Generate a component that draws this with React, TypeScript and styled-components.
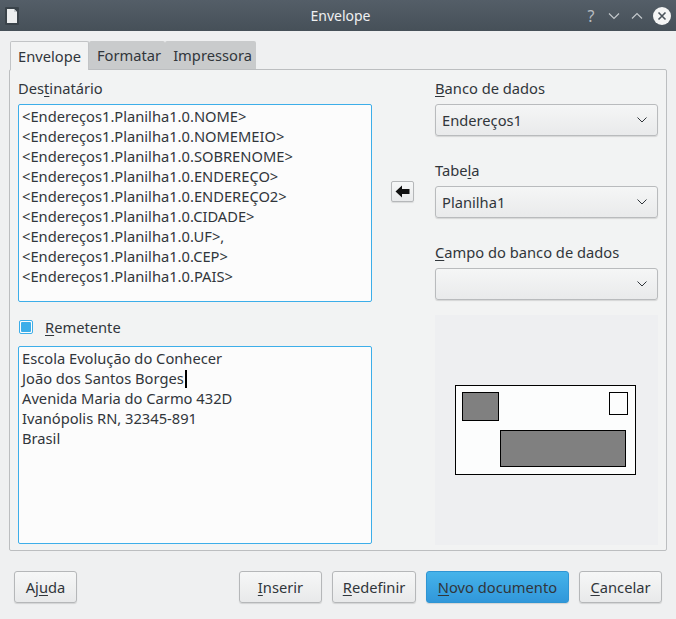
import React from "react";
import styled, { createGlobalStyle } from "styled-components";

const FS = "14.7px";

const Global = createGlobalStyle`
  html, body { margin: 0; padding: 0; background: #eff0f1; }
  body { font-family: "Noto Sans", "Open Sans", sans-serif; font-size: ${FS}; color: #31363b; }
  #root { width: 676px; height: 619px; overflow: hidden; }
`;

const Window = styled.div`
  width: 676px;
  height: 619px;
  display: flex;
  flex-direction: column;
  background: #eff0f1;
`;

const TitleBar = styled.div`
  height: 31px;
  flex: none;
  display: grid;
  grid-template-columns: 1fr auto 1fr;
  align-items: center;
  padding: 0 4px 0 5px;
  background: linear-gradient(#545e68, #465058);
  color: #eff0f1;
`;

const Title = styled.div`
  text-align: center;
  font-size: 14px;
  padding-left: 4px;
`;

const TitleButtons = styled.div`
  display: flex;
  justify-content: flex-end;
  align-items: center;
  gap: 7px;
`;

const TitleBtn = styled.div<{ $w?: number }>`
  width: ${(p) => p.$w ?? 16}px;
  height: 20px;
  display: flex;
  align-items: center;
  justify-content: center;
  color: #b8bdc2;
  font-size: 16px;
`;

const Body = styled.div`
  flex: 1;
  display: flex;
  flex-direction: column;
  padding: 10px 9px 0 9px;
`;

const TabBar = styled.div`
  display: flex;
  padding-left: 1px;
  height: 28px;
  position: relative;
  z-index: 1;
`;

const Tab = styled.div<{ $active?: boolean }>`
  height: ${(p) => (p.$active ? "29px" : "28px")};
  box-sizing: border-box;
  padding: 0 ${(p) => (p.$active ? "7px" : "4px")} 0 ${(p) => (p.$active ? "7px" : "8px")};
  display: flex;
  align-items: center;
  font-size: ${FS};
  background: ${(p) => (p.$active ? "#f2f3f3" : "#c9cbcc")};
  border: ${(p) => (p.$active ? "1px solid #c2c4c6" : "none")};
  border-bottom: none;
  border-radius: 2px 2px 0 0;
  color: #31363b;
`;

const Panel = styled.div`
  height: 482px;
  box-sizing: border-box;
  border: 1px solid #bcbec0;
  border-radius: 2px;
  background: #f2f3f3;
  padding: 8px 8px 5px 8px;
  display: grid;
  grid-template-columns: 354px 1fr 223px;
`;

const Column = styled.div`
  display: flex;
  flex-direction: column;
`;

const Middle = styled.div`
  display: flex;
  justify-content: center;
  align-items: flex-start;
  padding-top: 103px;
  padding-right: 2px;
`;

const Label = styled.div<{ $mt?: number }>`
  height: 20px;
  line-height: 20px;
  margin-top: ${(p) => p.$mt ?? 0}px;
  margin-bottom: 6px;
  font-size: ${FS};
  color: #31363b;
`;

const U = styled.span`
  text-decoration: underline;
  text-underline-offset: 2px;
`;

const TextBox = styled.div`
  height: 198px;
  box-sizing: border-box;
  border: 1px solid #3daee9;
  border-radius: 2px;
  background: #fcfcfc;
  padding: 1px 3px;
  font-size: ${FS};
  line-height: 20px;
  color: #31363b;
  white-space: pre;
  overflow: hidden;
`;

const Line = styled.div`
  height: 20px;
`;

const Caret = styled.span`
  display: inline-block;
  width: 2px;
  height: 18px;
  background: #000;
  vertical-align: -4px;
  margin-left: 1px;
`;

const CheckRow = styled.div`
  display: flex;
  align-items: center;
  height: 20px;
  margin: 15px 0 9px 1px;
  gap: 12px;
`;

const CheckBox = styled.div`
  width: 14px;
  height: 14px;
  box-sizing: border-box;
  border: 1px solid #3daee9;
  border-radius: 2px;
  background: #fcfcfc;
  display: flex;
  align-items: center;
  justify-content: center;
  &::after {
    content: "";
    width: 10px;
    height: 10px;
    background: #3daee9;
    border-radius: 1px;
  }
`;

const ArrowButton = styled.div`
  width: 23px;
  height: 21px;
  box-sizing: border-box;
  border: 1px solid #b5b7b9;
  border-radius: 2px;
  background: linear-gradient(#f6f7f7, #e9eaeb);
  box-shadow: 0 1px 1px rgba(0, 0, 0, 0.1);
  display: flex;
  align-items: center;
  justify-content: center;
`;

const Combo = styled.div`
  height: 32px;
  box-sizing: border-box;
  border: 1px solid #b9bbbd;
  border-radius: 3px;
  background: linear-gradient(#f5f6f6, #e9eaeb);
  box-shadow: 0 1px 1px rgba(0, 0, 0, 0.12);
  display: flex;
  align-items: center;
  justify-content: space-between;
  padding: 0 10px 0 6px;
  font-size: ${FS};
  color: #31363b;
`;

const Preview = styled.div`
  margin-top: 15px;
  height: 230px;
  background: #eeeff1;
  display: flex;
  align-items: center;
  justify-content: center;
  padding-right: 2px;
`;

const Footer = styled.div`
  display: flex;
  align-items: center;
  padding: 20px 5px 0 5px;
  gap: 10px;
`;

const Spacer = styled.div`
  flex: 1;
`;

const Button = styled.div<{ $w: number; $primary?: boolean }>`
  width: ${(p) => p.$w}px;
  height: 32px;
  box-sizing: border-box;
  border: 1px solid ${(p) => (p.$primary ? "#2f95d3" : "#b5b7b9")};
  border-radius: 3px;
  background: ${(p) =>
    p.$primary ? "linear-gradient(#45b3ea, #3197da)" : "linear-gradient(#f6f7f7, #e8e9ea)"};
  box-shadow: 0 1px 1px rgba(0, 0, 0, 0.12);
  display: flex;
  align-items: center;
  justify-content: center;
  font-size: ${FS};
  color: #31363b;
`;

const Chevron = () => (
  <svg width="10" height="6" viewBox="0 0 10 6">
    <path d="M0.5 0.5 L5 5 L9.5 0.5" fill="none" stroke="#31363b" strokeWidth="1" />
  </svg>
);

const DocIcon = () => (
  <svg width="14" height="18" viewBox="0 0 14 18">
    <rect x="0" y="0" width="14" height="18" fill="#3a434a" rx="1" />
    <path d="M2 2 H9 L12 5 V16 H2 Z" fill="#eceeef" />
    <path d="M9 2 V5 H12" fill="#c9cdd0" />
  </svg>
);

const recipient = [
  "<Endereços1.Planilha1.0.NOME>",
  "<Endereços1.Planilha1.0.NOMEMEIO>",
  "<Endereços1.Planilha1.0.SOBRENOME>",
  "<Endereços1.Planilha1.0.ENDEREÇO>",
  "<Endereços1.Planilha1.0.ENDEREÇO2>",
  "<Endereços1.Planilha1.0.CIDADE>",
  "<Endereços1.Planilha1.0.UF>,",
  "<Endereços1.Planilha1.0.CEP>",
  "<Endereços1.Planilha1.0.PAIS>",
];

export default function App() {
  return (
    <Window>
      <Global />
      <TitleBar>
        <DocIcon />
        <Title>Envelope</Title>
        <TitleButtons>
          <TitleBtn>?</TitleBtn>
          <TitleBtn>
            <svg width="12" height="8" viewBox="0 0 12 8">
              <path d="M1 1.5 L6 6.5 L11 1.5" fill="none" stroke="#c3c8cc" strokeWidth="1.2" />
            </svg>
          </TitleBtn>
          <TitleBtn>
            <svg width="12" height="8" viewBox="0 0 12 8">
              <path d="M1 6.5 L6 1.5 L11 6.5" fill="none" stroke="#c3c8cc" strokeWidth="1.2" />
            </svg>
          </TitleBtn>
          <TitleBtn $w={20}>
            <svg width="20" height="20" viewBox="0 0 20 20">
              <circle cx="10" cy="10" r="9" fill="#f4f5f5" />
              <path d="M6.5 6.5 L13.5 13.5 M13.5 6.5 L6.5 13.5" stroke="#4a535b" strokeWidth="1.6" />
            </svg>
          </TitleBtn>
        </TitleButtons>
      </TitleBar>
      <Body>
        <TabBar>
          <Tab $active>Envelope</Tab>
          <Tab>Formatar</Tab>
          <Tab>Impressora</Tab>
        </TabBar>
        <Panel>
          <Column>
            <Label>
              Des<U>t</U>inatário
            </Label>
            <TextBox>
              {recipient.map((l) => (
                <Line key={l}>{l}</Line>
              ))}
            </TextBox>
            <CheckRow>
              <CheckBox />
              <span>
                <U>R</U>emetente
              </span>
            </CheckRow>
            <TextBox>
              <Line>Escola Evolução do Conhecer</Line>
              <Line>
                João dos Santos Borges
                <Caret />
              </Line>
              <Line>Avenida Maria do Carmo 432D</Line>
              <Line>Ivanópolis RN, 32345-891</Line>
              <Line>Brasil</Line>
            </TextBox>
          </Column>
          <Middle>
            <ArrowButton>
              <svg width="15" height="13" viewBox="0 0 15 13">
                <path d="M0.5 6.5 L7 0.5 V4 H14.5 V9 H7 V12.5 Z" fill="#111" />
              </svg>
            </ArrowButton>
          </Middle>
          <Column>
            <Label>
              <U>B</U>anco de dados
            </Label>
            <Combo>
              Endereços1
              <Chevron />
            </Combo>
            <Label $mt={24}>
              Tabe<U>l</U>a
            </Label>
            <Combo>
              Planilha1
              <Chevron />
            </Combo>
            <Label $mt={24}>
              <U>C</U>ampo do banco de dados
            </Label>
            <Combo>
              <span />
              <Chevron />
            </Combo>
            <Preview>
              <svg width="182" height="91" viewBox="0 0 182 91">
                <rect x="0.5" y="0.5" width="180" height="89" fill="#fcfdfd" stroke="#000" />
                <rect x="7.5" y="7.5" width="36" height="28" fill="#808080" stroke="#000" />
                <rect x="154.5" y="7.5" width="18" height="22" fill="#fcfdfd" stroke="#000" />
                <rect x="45.5" y="45.5" width="125" height="36" fill="#808080" stroke="#000" />
              </svg>
            </Preview>
          </Column>
        </Panel>
        <Footer>
          <Button $w={63}>
            <span>
              Aj<U>u</U>da
            </span>
          </Button>
          <Spacer />
          <Button $w={83}>
            <span>
              <U>I</U>nserir
            </span>
          </Button>
          <Button $w={84}>
            <span>
              <U>R</U>edefinir
            </span>
          </Button>
          <Button $w={143} $primary>
            <span>
              <U>N</U>ovo documento
            </span>
          </Button>
          <Button $w={83}>
            <span>
              <U>C</U>ancelar
            </span>
          </Button>
        </Footer>
      </Body>
    </Window>
  );
}
